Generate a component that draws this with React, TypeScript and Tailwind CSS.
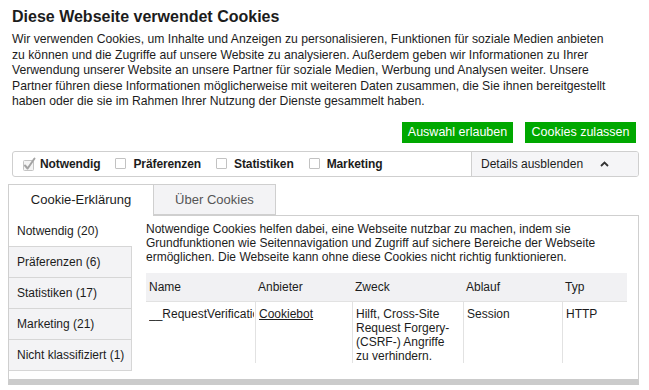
import React from 'react';

const CATEGORIES = [
  { label: 'Notwendig (20)', active: true },
  { label: 'Präferenzen (6)', active: false },
  { label: 'Statistiken (17)', active: false },
  { label: 'Marketing (21)', active: false },
  { label: 'Nicht klassifiziert (1)', active: false },
];

const COLUMNS = ['Name', 'Anbieter', 'Zweck', 'Ablauf', 'Typ'];

const INTRO = [
  'Wir verwenden Cookies, um Inhalte und Anzeigen zu personalisieren, Funktionen für soziale Medien anbieten',
  'zu können und die Zugriffe auf unsere Website zu analysieren. Außerdem geben wir Informationen zu Ihrer',
  'Verwendung unserer Website an unsere Partner für soziale Medien, Werbung und Analysen weiter. Unsere',
  'Partner führen diese Informationen möglicherweise mit weiteren Daten zusammen, die Sie ihnen bereitgestellt',
  'haben oder die sie im Rahmen Ihrer Nutzung der Dienste gesammelt haben.',
];

const CheckedBox = () => (
  <svg width="14" height="14" viewBox="0 0 14 14" className="shrink-0">
    <rect x="1.5" y="3.5" width="10" height="10" rx="1" fill="#f4f4f4" stroke="#c4c4c4" />
    <path d="M3 8.5 L5.6 11.5 L12.5 1.5" fill="none" stroke="#a3a3a3" strokeWidth="2" strokeLinecap="round" strokeLinejoin="round" />
  </svg>
);

const EmptyBox = () => (
  <span className="inline-block w-[11px] h-[11px] shrink-0 border border-[#c2c2c2] rounded-[1px] bg-white" />
);

const Toggle = ({ label, checked }: { label: string; checked?: boolean }) => (
  <label className={checked ? 'flex items-center gap-[4px]' : 'flex items-center gap-[7px]'}>
    {checked ? <CheckedBox /> : <EmptyBox />}
    <span className="font-bold text-[12px] tracking-[-0.1px]">{label}</span>
  </label>
);

export default function App() {
  return (
    <div className="w-[649px] h-[390px] overflow-hidden bg-white text-[#1c1c1c] font-['Liberation_Sans',Arial,sans-serif]">
      <div className="px-[12px] pt-[7px]">
        <h1 className="text-[16px] leading-[20px] font-bold">Diese Webseite verwendet Cookies</h1>
        <p className="mt-[5px] text-[12.2px] leading-[15.6px] whitespace-nowrap">
          {INTRO.map((line) => (
            <span key={line} className="block">
              {line}
            </span>
          ))}
        </p>
      </div>

      <div className="flex justify-end gap-[12px] pr-[13px] mt-[12px]">
        <button className="h-[21px] w-[111px] bg-[#00a800] text-white text-[12.5px] leading-[21px] text-center">
          Auswahl erlauben
        </button>
        <button className="h-[21px] w-[111px] bg-[#00a800] text-white text-[12.5px] leading-[21px] text-center">
          Cookies zulassen
        </button>
      </div>

      <div className="ml-[12px] w-[627px] h-[26px] mt-[8px] flex border border-[#cfcfcf] rounded-[3px] overflow-hidden">
        <div className="flex-1 flex items-center gap-[15px] pl-[9px]">
          <Toggle label="Notwendig" checked />
          <Toggle label="Präferenzen" />
          <Toggle label="Statistiken" />
          <Toggle label="Marketing" />
        </div>
        <div className="w-[167px] flex items-center border-l border-[#cfcfcf] bg-[#f5f5f7] pl-[9px] gap-[17px] text-[12px]">
          <span>Details ausblenden</span>
          <svg width="9" height="6" viewBox="0 0 9 6">
            <path d="M1 5 L4.5 1.5 L8 5" fill="none" stroke="#333" strokeWidth="1.8" />
          </svg>
        </div>
      </div>

      <div className="ml-[8px] mt-[7px] flex items-start text-[13px]">
        <div className="relative z-10 w-[146px] h-[32px] border border-b-0 border-[#cfcfcf] bg-white flex items-center justify-center pb-[1px]">
          Cookie-Erklärung
        </div>
        <div className="w-[123px] h-[31px] -ml-[1px] border border-[#cfcfcf] bg-[#f3f3f5] text-[#555] flex items-center justify-center">
          Über Cookies
        </div>
      </div>

      <div className="ml-[8px] -mt-[1px] w-[631px] h-[170px] flex border border-[#cfcfcf] border-b-[6px] border-b-[#cbcbcb]">
        <div className="w-[123px] flex flex-col text-[12px]">
          {CATEGORIES.map((c) => (
            <div
              key={c.label}
              className={
                c.active
                  ? 'h-[31px] flex items-center pl-[8px] border-b border-[#d6d6d6] bg-white'
                  : 'h-[31px] flex items-center pl-[8px] border-b border-r border-[#d6d6d6] bg-[#f3f3f5]'
              }
            >
              {c.label}
            </div>
          ))}
        </div>

        <div className="flex-1 flex flex-col pl-[14px] pr-[11px] pt-[6px] pb-[16px] text-[12px] leading-[14px] min-w-0">
          <p>
            Notwendige Cookies helfen dabei, eine Webseite nutzbar zu machen, indem sie
            Grundfunktionen wie Seitennavigation und Zugriff auf sichere Bereiche der Webseite
            ermöglichen. Die Webseite kann ohne diese Cookies nicht richtig funktionieren.
          </p>

          <div className="mt-[9px] flex-1 overflow-hidden">
            <div className="grid grid-cols-[109px_97px_111px_99px_64px] h-[29px] bg-[#f1f1f3] border-b border-[#e2e2e2]">
              {COLUMNS.map((col) => (
                <div key={col} className="pl-[3px] flex items-center">
                  {col}
                </div>
              ))}
            </div>
            <div className="grid grid-cols-[109px_97px_111px_99px_64px] h-[80px]">
              <div className="pl-[3px] pt-[5px] pr-[1px] overflow-hidden">
                <div className="whitespace-nowrap overflow-hidden">__RequestVerificationToken</div>
              </div>
              <div className="pl-[3px] pt-[5px] border-l border-[#e2e2e2]">
                <span className="underline">Cookiebot</span>
              </div>
              <div className="pl-[3px] pt-[5px] border-l border-[#e2e2e2]">
                Hilft, Cross-Site
                <br />
                Request Forgery-
                <br />
                (CSRF-) Angriffe
                <br />
                zu verhindern.
              </div>
              <div className="pl-[3px] pt-[5px] border-l border-[#e2e2e2]">Session</div>
              <div className="pl-[3px] pt-[5px] border-l border-[#e2e2e2]">HTTP</div>
            </div>
          </div>
        </div>
      </div>
    </div>
  );
}
